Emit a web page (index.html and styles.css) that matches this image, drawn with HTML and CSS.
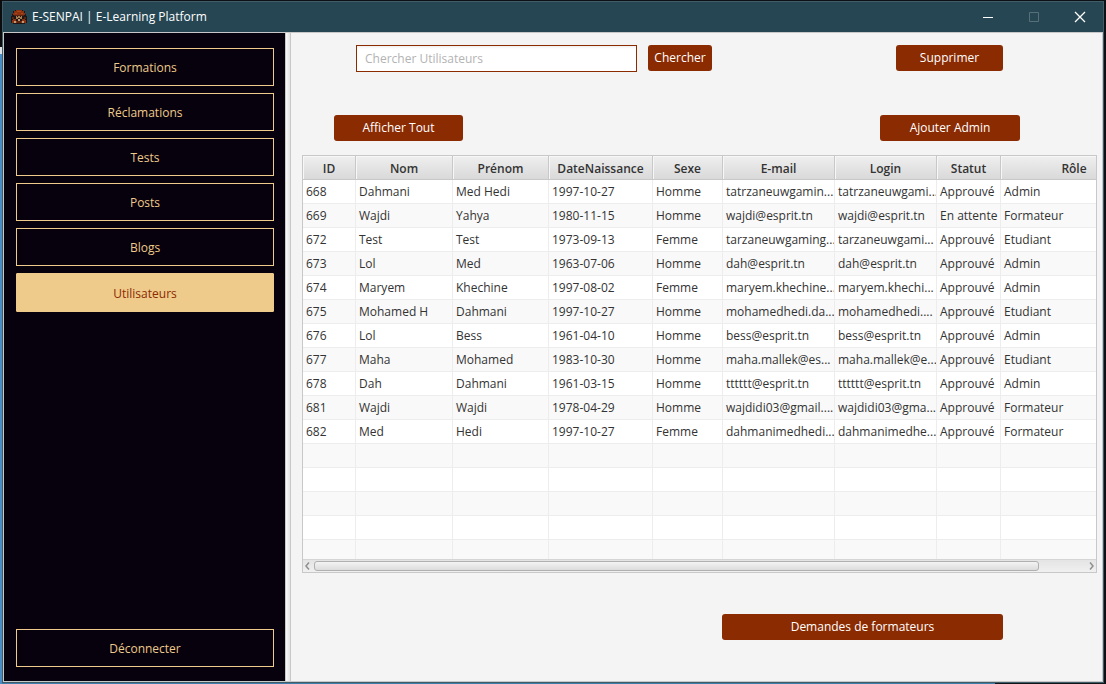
FILE: index.html
```
<!DOCTYPE html>
<html lang="fr">
<head>
<meta charset="utf-8">
<title>E-SENPAI | E-Learning Platform</title>
<link rel="stylesheet" href="styles.css">
</head>
<body>
<div class="window">
  <header class="titlebar">
    <svg class="app-icon" viewBox="0 0 16 16" shape-rendering="crispEdges" aria-hidden="true">
      <path fill="#1d1718" d="M4 1h8v1h2v3h1v2h1v7h-2v1H2v-1H0V7h1V5h1V2h2z"/>
      <path fill="#8c3210" d="M5 1h6v1h2v2h1v2H2V4h1V2h2z"/>
      <path fill="#a9451a" d="M6 2h4v1H6zM4 4h2v1H4zM10 4h2v1h-2z"/>
      <path fill="#5a2413" d="M3 6h10v1H3zM1 8h2v2H1zM13 8h2v2h-2z"/>
      <path fill="#a67c55" d="M5 7h6v3H5z"/>
      <path fill="#2a1a16" d="M6 7h1v1H6zM9 7h1v1H9zM7 9h2v1H7z"/>
      <path fill="#8c3210" d="M2 10h3v2h1v2H1v-3h1zM11 10h3v1h1v3h-5v-2h1z"/>
      <path fill="#c09a75" d="M7 10h2v2H7zM3 12h2v2H3zM11 12h2v2h-2z"/>
      <path fill="#5a2413" d="M6 12h4v2H6z"/>
    </svg>
    <h1 class="title">E-SENPAI | E-Learning Platform</h1>
    <div class="window-controls">
      <button class="window-button" aria-label="Réduire"><svg viewBox="0 0 12 12"><path d="M1 6.5h10"/></svg></button>
      <button class="window-button" aria-label="Agrandir" disabled><svg viewBox="0 0 12 12"><path d="M1.500 1.500h9v9h-9z"/></svg></button>
      <button class="window-button" aria-label="Fermer"><svg viewBox="0 0 12 12"><path stroke-width="1.300" d="M1 1l10 10M11 1L1 11"/></svg></button>
    </div>
  </header>
  <div class="content">
    <nav class="sidebar">
      <button class="nav-button">Formations</button>
      <button class="nav-button">Réclamations</button>
      <button class="nav-button">Tests</button>
      <button class="nav-button">Posts</button>
      <button class="nav-button">Blogs</button>
      <button class="nav-button active" aria-current="page">Utilisateurs</button>
      <button class="nav-button logout">Déconnecter</button>
    </nav>
    <div class="divider"></div>
    <main class="main">
      <form class="search-row">
        <input class="search" type="text" placeholder="Chercher Utilisateurs" aria-label="Chercher Utilisateurs">
        <button class="button find" type="button">Chercher</button>
        <button class="button delete" type="button">Supprimer</button>
      </form>
      <div class="action-row">
        <button class="button show-all">Afficher Tout</button>
        <button class="button add-admin">Ajouter Admin</button>
      </div>
      <section class="table-pane">
        <div class="viewport">
          <table class="users">
            <colgroup>
              <col class="col-id"><col class="col-nom"><col class="col-prenom"><col class="col-date"><col class="col-sexe"><col class="col-email"><col class="col-login"><col class="col-statut"><col class="col-role">
            </colgroup>
            <thead>
              <tr><th>ID</th><th>Nom</th><th>Prénom</th><th>DateNaissance</th><th>Sexe</th><th>E-mail</th><th>Login</th><th>Statut</th><th>Rôle</th></tr>
            </thead>
            <tbody>
              <tr><td>668</td><td>Dahmani</td><td>Med Hedi</td><td>1997-10-27</td><td>Homme</td><td>tatrzaneuwgamin...</td><td>tatrzaneuwgami...</td><td>Approuvé</td><td>Admin</td></tr>
              <tr><td>669</td><td>Wajdi</td><td>Yahya</td><td>1980-11-15</td><td>Homme</td><td>wajdi@esprit.tn</td><td>wajdi@esprit.tn</td><td>En attente</td><td>Formateur</td></tr>
              <tr><td>672</td><td>Test</td><td>Test</td><td>1973-09-13</td><td>Femme</td><td>tarzaneuwgaming...</td><td>tarzaneuwgami...</td><td>Approuvé</td><td>Etudiant</td></tr>
              <tr><td>673</td><td>Lol</td><td>Med</td><td>1963-07-06</td><td>Homme</td><td>dah@esprit.tn</td><td>dah@esprit.tn</td><td>Approuvé</td><td>Admin</td></tr>
              <tr><td>674</td><td>Maryem</td><td>Khechine</td><td>1997-08-02</td><td>Femme</td><td>maryem.khechine...</td><td>maryem.khechi...</td><td>Approuvé</td><td>Admin</td></tr>
              <tr><td>675</td><td>Mohamed H</td><td>Dahmani</td><td>1997-10-27</td><td>Homme</td><td>mohamedhedi.da...</td><td>mohamedhedi....</td><td>Approuvé</td><td>Etudiant</td></tr>
              <tr><td>676</td><td>Lol</td><td>Bess</td><td>1961-04-10</td><td>Homme</td><td>bess@esprit.tn</td><td>bess@esprit.tn</td><td>Approuvé</td><td>Admin</td></tr>
              <tr><td>677</td><td>Maha</td><td>Mohamed</td><td>1983-10-30</td><td>Homme</td><td>maha.mallek@es...</td><td>maha.mallek@e...</td><td>Approuvé</td><td>Etudiant</td></tr>
              <tr><td>678</td><td>Dah</td><td>Dahmani</td><td>1961-03-15</td><td>Homme</td><td>tttttt@esprit.tn</td><td>tttttt@esprit.tn</td><td>Approuvé</td><td>Admin</td></tr>
              <tr><td>681</td><td>Wajdi</td><td>Wajdi</td><td>1978-04-29</td><td>Homme</td><td>wajdidi03@gmail....</td><td>wajdidi03@gma...</td><td>Approuvé</td><td>Formateur</td></tr>
              <tr><td>682</td><td>Med</td><td>Hedi</td><td>1997-10-27</td><td>Femme</td><td>dahmanimedhedi...</td><td>dahmanimedhe...</td><td>Approuvé</td><td>Formateur</td></tr>
              <tr><td></td><td></td><td></td><td></td><td></td><td></td><td></td><td></td><td></td></tr>
              <tr><td></td><td></td><td></td><td></td><td></td><td></td><td></td><td></td><td></td></tr>
              <tr><td></td><td></td><td></td><td></td><td></td><td></td><td></td><td></td><td></td></tr>
              <tr><td></td><td></td><td></td><td></td><td></td><td></td><td></td><td></td><td></td></tr>
              <tr><td></td><td></td><td></td><td></td><td></td><td></td><td></td><td></td><td></td></tr>
            </tbody>
          </table>
        </div>
        <div class="scrollbar">
          <svg class="arrow" viewBox="0 0 5 8"><path d="M4 0.500L1 4l3 3.500"/></svg>
          <div class="track"><div class="thumb"></div></div>
          <svg class="arrow" viewBox="0 0 5 8"><path d="M1 0.500L4 4L1 7.500"/></svg>
        </div>
      </section>
      <footer class="footer">
        <button class="button requests">Demandes de formateurs</button>
      </footer>
    </main>
  </div>
</div>
</body>
</html>
```
FILE: styles.css
```
* {
  box-sizing: border-box;
}

body {
  margin: 0;
  height: 100vh;
  padding: 1px 2px;
  background:
    linear-gradient(#0c0c0e 47px, #dfe3ea 47px 54px, #4a8cc4 54px) left / 2px 100% no-repeat,
    linear-gradient(to right, #3f7cab 90%, #10151a 90%) bottom / 100% 1px no-repeat,
    #0d1014;
  font-family: "Open Sans", "Noto Sans", sans-serif;
  font-size: 12px;
  line-height: 16px;
  color: #333;
}

button,
input {
  font: inherit;
  margin: 0;
}

.window {
  height: 100%;
  display: flex;
  flex-direction: column;
  border: 1px solid #3f5c67;
  background: #264653;
}

/* Title bar */
.titlebar {
  display: flex;
  align-items: center;
  height: 30px;
  flex: none;
  padding-left: 8px;
}

.app-icon {
  width: 16px;
  height: 16px;
}

.title {
  margin: 0 auto 0 5px;
  font-size: 12px;
  font-weight: 400;
  color: #fff;
}

.window-controls {
  display: flex;
  align-self: stretch;
}

.window-button {
  display: grid;
  place-items: center;
  width: 46px;
  padding: 0;
  border: 0;
  background: none;
}

.window-button svg {
  width: 12px;
  height: 12px;
  fill: none;
  stroke: #fff;
}

.window-button:disabled svg {
  stroke: #566f79;
}

/* Body of the window */
.content {
  flex: 1;
  min-height: 0;
  display: flex;
  border: 1px solid #c8c8c8;
  background: #f4f4f4;
}

.sidebar {
  flex: 0 0 281px;
  display: flex;
  flex-direction: column;
  gap: 7px;
  padding: 15px 11px 14px 12px;
  background: #06010d;
}

.nav-button {
  height: 38px;
  padding: 2px 0 0;
  border: 1px solid #eeca8b;
  background: none;
  color: #eeca8b;
}

.nav-button.active {
  height: 39px;
  border-radius: 1px;
  background: #eeca8b;
  color: #8a2b02;
}

.logout {
  margin-top: auto;
}

.divider {
  flex: 0 0 6px;
  border: solid #c8c8c8;
  border-width: 0 1px;
  background: linear-gradient(to right, #fafafa, #e2e2e2);
}

.main {
  flex: 1;
  min-width: 0;
  display: flex;
  flex-direction: column;
  padding: 12px 5px 41px 11px;
}

.button {
  height: 26px;
  padding: 0 6px;
  border: 0;
  border-radius: 3px;
  background: #8a2b02;
  color: #fff;
}

.search-row {
  display: flex;
  gap: 11px;
  height: 27px;
  padding: 0 94px 0 54px;
}

.search {
  width: 281px;
  height: 27px;
  padding: 0 8px;
  border: 1px solid #8a2b02;
  border-radius: 0;
  outline: 0;
  background: linear-gradient(#f0f0f0, #fff 3px);
  color: #333;
}

.search::placeholder {
  color: #b3b3b3;
  opacity: 1;
}

.find {
  width: 64px;
}

.delete {
  width: 107px;
  margin-left: auto;
}

.action-row {
  display: flex;
  justify-content: space-between;
  margin: 43px 0 14px;
  padding: 0 77px 0 32px;
}

.show-all {
  width: 129px;
}

.add-admin {
  width: 140px;
}

/* Users table */
.table-pane {
  flex: 1;
  min-height: 0;
  display: flex;
  flex-direction: column;
  border: 1px solid #c8c8c8;
  background: #fff;
}

.viewport {
  flex: 1;
  min-height: 0;
  overflow: hidden;
}

.users {
  width: 100%;
  min-width: 845px;
  table-layout: fixed;
  border-collapse: separate;
  border-spacing: 0;
}

.col-id { width: 53px; }
.col-nom { width: 97px; }
.col-prenom { width: 96px; }
.col-date { width: 104px; }
.col-sexe { width: 70px; }
.col-email { width: 112px; }
.col-login { width: 102px; }
.col-statut { width: 64px; }

.users th,
.users td {
  height: 24px;
  padding: 0 0 0 3px;
  overflow: hidden;
  white-space: nowrap;
}

.users th {
  padding: 2px 0 0;
  border: solid #c8c8c8;
  border-width: 0 1px 1px 0;
  background: linear-gradient(#efefef, #d9d9d9);
  box-shadow: inset 1px 1px #f7f7f7;
  font-weight: 600;
}

.users td {
  border: solid #ededed;
  border-width: 0 1px 1px 0;
}

.users tbody tr:nth-child(even) {
  background: #f9f9f9;
}

.scrollbar {
  flex: none;
  display: flex;
  align-items: center;
  gap: 4px;
  height: 13px;
  padding: 0 2px;
  border-top: 1px solid #d5d5d5;
  background: linear-gradient(#e4e4e4, #f0f0f0);
}

.arrow {
  width: 5px;
  height: 8px;
  fill: none;
  stroke: #8f8f8f;
  stroke-width: 1.5;
}

.track {
  flex: 1;
}

.thumb {
  width: 94%;
  height: 10px;
  border: 1px solid #b0b0b0;
  border-radius: 3px;
  background: linear-gradient(#f3f3f3, #dcdcdc);
}

.footer {
  display: flex;
  justify-content: flex-end;
  margin-top: 41px;
  padding-right: 94px;
}

.requests {
  width: 281px;
}
```
